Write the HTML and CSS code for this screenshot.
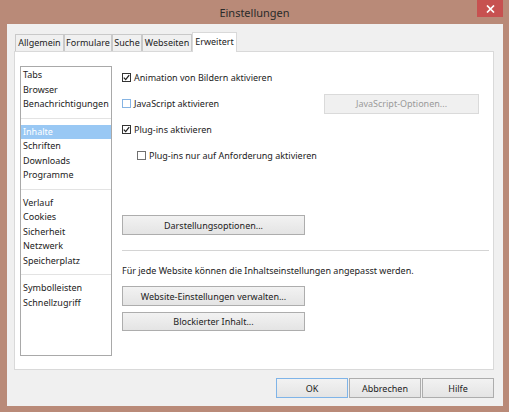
FILE: index.html
```html
<!DOCTYPE html>
<html lang="de">
<head>
<meta charset="utf-8">
<title>Einstellungen</title>
<link rel="stylesheet" href="styles.css">
</head>
<body>
<div class="window">
  <div class="titlebar">
    <span class="title">Einstellungen</span>
    <span class="close"><svg width="9" height="8" viewBox="0 0 9 8"><path d="M1 0.5 L8 7.5 M8 0.5 L1 7.5" stroke="#fff" stroke-width="1.7"/></svg></span>
  </div>
  <div class="client">
    <div class="tabs">
      <div class="tab w49">Allgemein</div>
      <div class="tab w48">Formulare</div>
      <div class="tab w30">Suche</div>
      <div class="tab w50">Webseiten</div>
      <div class="tab active w45">Erweitert</div>
    </div>
    <div class="panel">
      <div class="list">
        <div class="item">Tabs</div>
        <div class="item">Browser</div>
        <div class="item">Benachrichtigungen</div>
        <div class="sep"></div>
        <div class="item selected">Inhalte</div>
        <div class="item">Schriften</div>
        <div class="item">Downloads</div>
        <div class="item">Programme</div>
        <div class="sep"></div>
        <div class="item">Verlauf</div>
        <div class="item">Cookies</div>
        <div class="item">Sicherheit</div>
        <div class="item">Netzwerk</div>
        <div class="item">Speicherplatz</div>
        <div class="sep"></div>
        <div class="item">Symbolleisten</div>
        <div class="item">Schnellzugriff</div>
      </div>
      <div class="content">
        <div class="row">
          <span class="cb checked"><svg width="7" height="7" viewBox="0 0 7 7"><path d="M0.8 3.6 L2.7 5.6 L6.2 1.2" fill="none" stroke="#222" stroke-width="1.3"/></svg></span>
          <span class="label">Animation von Bildern aktivieren</span>
        </div>
        <div class="row">
          <span class="cb focus"></span>
          <span class="label">JavaScript aktivieren</span>
          <span class="btn disabled jsbtn">JavaScript-Optionen...</span>
        </div>
        <div class="row">
          <span class="cb checked"><svg width="7" height="7" viewBox="0 0 7 7"><path d="M0.8 3.6 L2.7 5.6 L6.2 1.2" fill="none" stroke="#222" stroke-width="1.3"/></svg></span>
          <span class="label">Plug-ins aktivieren</span>
        </div>
        <div class="row sub">
          <span class="cb plain"></span>
          <span class="label">Plug-ins nur auf Anforderung aktivieren</span>
        </div>
        <span class="btn wide darst">Darstellungsoptionen...</span>
        <div class="hr"></div>
        <div class="note">Für jede Website können die Inhaltseinstellungen angepasst werden.</div>
        <span class="btn wide site">Website-Einstellungen verwalten...</span>
        <span class="btn wide block">Blockierter Inhalt...</span>
      </div>
    </div>
    <div class="footer">
      <span class="btn fbtn default">OK</span>
      <span class="btn fbtn">Abbrechen</span>
      <span class="btn fbtn">Hilfe</span>
    </div>
  </div>
</div>
</body>
</html>
```
FILE: styles.css
```css
html, body {
  margin: 0;
  padding: 0;
  background: #b98a78;
}
body {
  font-family: "Noto Sans", "Open Sans", sans-serif;
  font-size: 9px;
  color: #222;
}
.window {
  width: 509px;
  height: 412px;
  background: #b98a78;
  padding: 0 6px 6px 7px;
  box-sizing: border-box;
  display: flex;
  flex-direction: column;
}
.titlebar {
  height: 24px;
  display: grid;
  grid-template-columns: 1fr auto 1fr;
  margin-left: -7px;
  margin-right: -6px;
}
.title {
  grid-column: 2;
  font-size: 11px;
  line-height: 26px;
  color: #2a2a2a;
}
.close {
  grid-column: 3;
  justify-self: end;
  margin-right: 6px;
  width: 26px;
  height: 17px;
  background: #c75150;
  display: flex;
  align-items: center;
  justify-content: center;
}
.close svg { display: block; }
.client {
  flex: 1;
  background: #f0f0f0;
  padding: 8px 9px 0 7px;
  display: flex;
  flex-direction: column;
}
.tabs {
  display: flex;
  align-items: flex-end;
  height: 20px;
  padding-left: 1px;
}
.tab {
  box-sizing: border-box;
  height: 18px;
  border: 1px solid #c9c9c9;
  border-bottom: none;
  background: #f0f0f0;
  text-align: center;
  line-height: 16px;
  white-space: nowrap;
}
.tab.active {
  height: 20px;
  background: #fff;
  border-color: #d9d9d9;
  line-height: 18px;
  position: relative;
  z-index: 1;
}
.w49 { width: 49px; }
.w48 { width: 48px; }
.w30 { width: 30px; }
.w50 { width: 50px; }
.w45 { width: 45px; }
.panel {
  margin-top: -1px;
  height: 319px;
  box-sizing: border-box;
  background: #fff;
  border: 1px solid #d9d9d9;
  padding: 12px 4px 13px 5px;
  display: flex;
  gap: 10px;
}
.list {
  width: 92px;
  box-sizing: border-box;
  margin-top: 2px;
  border: 1px solid #a9a9a9;
  padding-top: 1px;
}
.item {
  line-height: 14.5px;
  height: 14.5px;
  padding-left: 2px;
  white-space: nowrap;
}
.item.selected {
  background: #99c8f4;
  color: #fff;
}
.sep {
  height: 1px;
  background: #e3e3e3;
  margin: 6px 0;
}
.content {
  flex: 1;
  display: flex;
  flex-direction: column;
  align-items: flex-start;
}
.row {
  height: 26px;
  width: 100%;
  display: flex;
  align-items: center;
}
.row.sub { padding-left: 15px; box-sizing: border-box; }
.cb {
  width: 9px;
  height: 9px;
  box-sizing: border-box;
  border: 1px solid #333;
  background: #fff;
  display: flex;
  align-items: center;
  justify-content: center;
  margin-right: 3px;
  margin-top: 1px;
}
.cb.focus { border-color: #86b4e3; }
.cb.plain { border-color: #707070; }
.cb svg { display: block; }
.label { white-space: nowrap; }
.btn {
  box-sizing: border-box;
  display: flex;
  align-items: center;
  justify-content: center;
  border: 1px solid #adadad;
  background: linear-gradient(#f2f2f2, #e4e4e4);
  white-space: nowrap;
}
.btn.disabled {
  background: #f0f0f0;
  border-color: #dadada;
  color: #9a9a9a;
}
.jsbtn {
  margin-left: auto;
  margin-right: 10px;
  width: 155px;
  height: 20px;
  margin-top: 1px;
}
.wide {
  width: 183px;
  height: 20px;
}
.darst { margin-top: 47px; }
.hr {
  align-self: stretch;
  height: 1px;
  background: #d4d4d4;
  margin-top: 15px;
}
.note {
  margin-top: 13px;
  line-height: 14px;
  white-space: nowrap;
}
.site { margin-top: 8px; }
.block { margin-top: 6px; height: 19px; }
.footer {
  display: flex;
  justify-content: flex-end;
  gap: 1px;
  margin-top: 8px;
}
.fbtn {
  width: 72px;
  height: 20px;
}
.fbtn.default {
  border-color: #7fb4e8;
}
```
